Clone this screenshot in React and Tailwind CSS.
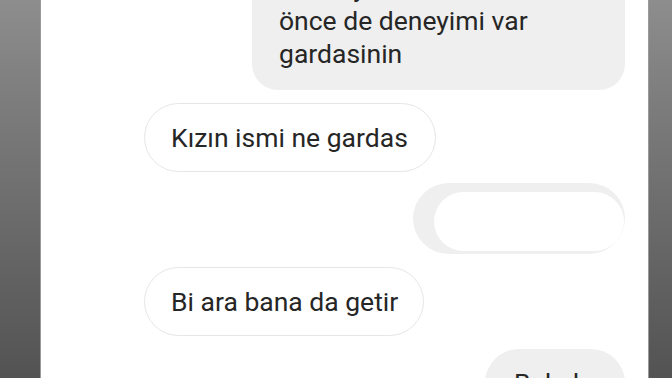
const font = { fontFamily: 'Roboto, "Noto Sans", sans-serif' };

function Bubble({ children, side = 'left', tone = 'light', className = '' }) {
  const base =
    tone === 'gray'
      ? 'bg-[#efefef]'
      : 'bg-white border border-[#e6e6e6]';
  return (
    <div className={side === 'right' ? 'flex justify-end pr-[23px]' : 'flex justify-start pl-[103px]'}>
      <div className={`${base} ${className}`}>{children}</div>
    </div>
  );
}

export default function App() {
  return (
    <div className="flex h-[378px] w-[672px] overflow-hidden bg-white" style={font}>
      <div className="w-[41px] shrink-0 bg-gradient-to-b from-[#8d8d8d] to-[#535353] border-r border-[#9a9a9a]" />

      <div className="flex-1 overflow-hidden bg-white">
        <div className="-mt-[48px] flex flex-col text-[26.5px] leading-[33px] text-[#262626]">
          <Bubble side="right" tone="gray" className="w-[373px] rounded-[26px] pl-[27px] pr-4 pt-[19px] pb-[20px]">
            <p>Zaten yeni bir kız</p>
            <p>önce de deneyimi var</p>
            <p>gardasinin</p>
          </Bubble>

          <div className="mt-[13px]">
            <Bubble className="rounded-full pl-[26px] pr-[27px] py-[17px]">
              <p>Kızın ismi ne gardas</p>
            </Bubble>
          </div>

          <div className="mt-[11px]">
            <Bubble side="right" tone="gray" className="w-[212px] rounded-full pl-[21px] pr-[1px] pt-[9px] pb-[3px]">
              <div className="h-[59px] rounded-full bg-white" />
            </Bubble>
          </div>

          <div className="mt-[13px]">
            <Bubble className="rounded-full pl-[26px] pr-[25px] py-[17px]">
              <p>Bi ara bana da getir</p>
            </Bubble>
          </div>

          <div className="mt-[13px]">
            <Bubble side="right" tone="gray" className="w-[140px] rounded-t-[34px] pl-[29px] pt-[17px] pb-4">
              <p>Bakalım</p>
            </Bubble>
          </div>
        </div>
      </div>

      <div className="w-[24px] shrink-0 bg-gradient-to-b from-[#8d8d8d] to-[#535353] border-l border-[#9a9a9a]" />
    </div>
  );
}
